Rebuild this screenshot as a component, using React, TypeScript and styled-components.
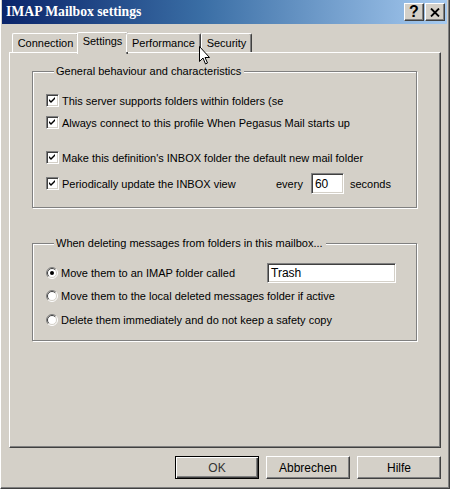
import React from "react";
import styled, { createGlobalStyle } from "styled-components";

const GlobalStyle = createGlobalStyle`
  html, body {
    margin: 0;
    padding: 0;
    background: #d4d0c8;
  }
  body {
    font-family: "Liberation Sans", Arial, sans-serif;
    font-size: 11px;
    color: #000;
  }
`;

const Window = styled.div`
  position: relative;
  box-sizing: border-box;
  width: 450px;
  height: 489px;
  background: #d4d0c8;
  border-left: 1px solid #ffffff;
  border-right: 1px solid #404040;
  border-bottom: 1px solid #404040;
  box-shadow: inset -1px -1px 0 #808080;
  display: flex;
  flex-direction: column;
`;

const TitleBar = styled.div`
  height: 24px;
  margin: 0 2px 0 1px;
  padding: 0 2px 0 4px;
  background: linear-gradient(90deg, #0a246a 0%, #3a6ea5 45%, #a6caf0 100%);
  display: flex;
  align-items: center;
`;

const Title = styled.div`
  flex: 1;
  color: #fff;
  font-family: "Liberation Serif", "Times New Roman", serif;
  font-weight: bold;
  font-size: 13.7px;
`;

const CaptionButton = styled.div`
  box-sizing: border-box;
  width: 20px;
  height: 18px;
  margin-left: 1px;
  background: #d4d0c8;
  border-top: 1px solid #ffffff;
  border-left: 1px solid #ffffff;
  border-right: 1px solid #404040;
  border-bottom: 1px solid #404040;
  box-shadow: inset -1px -1px 0 #808080;
  display: flex;
  align-items: center;
  justify-content: center;
  font-family: "Liberation Sans", Arial, sans-serif;
  font-weight: bold;
  font-size: 16px;
  line-height: 1;
  color: #000;
`;

const Content = styled.div`
  flex: 1;
  padding: 8px 8px 0 8px;
  display: flex;
  flex-direction: column;
`;

const TabStrip = styled.div`
  height: 20px;
  padding-left: 3px;
  display: flex;
  align-items: flex-end;
  position: relative;
  z-index: 1;
`;

const Tab = styled.div<{ $active?: boolean; $width: number }>`
  box-sizing: border-box;
  width: ${(p) => p.$width + (p.$active ? 4 : 0)}px;
  height: ${(p) => (p.$active ? 22 : 19)}px;
  margin: ${(p) => (p.$active ? "0 -2px -2px -2px" : "0")};
  background: #d4d0c8;
  border-top: 1px solid #ffffff;
  border-left: 1px solid #ffffff;
  border-right: 1px solid #404040;
  box-shadow: inset -1px 0 0 #808080;
  border-radius: 2px 2px 0 0;
  display: flex;
  align-items: ${(p) => (p.$active ? "flex-start" : "center")};
  padding-top: ${(p) => (p.$active ? 2 : 0)}px;
  justify-content: center;
  white-space: nowrap;
  font-size: 11px;
`;

const Panel = styled.div`
  box-sizing: border-box;
  width: 432px;
  height: 396px;
  background: #d4d0c8;
  border-top: 1px solid #ffffff;
  border-left: 1px solid #ffffff;
  border-right: 1px solid #404040;
  border-bottom: 1px solid #404040;
  box-shadow: inset -1px -1px 0 #808080;
  padding: 12px 0 0 22px;
`;

const Group = styled.fieldset<{ $height: number; $gap?: number }>`
  box-sizing: border-box;
  width: 385px;
  height: ${(p) => p.$height}px;
  margin: ${(p) => p.$gap ?? 0}px 0 0 0;
  padding: 0 0 0 13px;
  border: 1px solid #808080;
  box-shadow: 1px 1px 0 #ffffff, inset 1px 1px 0 #ffffff;
  min-width: 0;
`;

const Legend = styled.legend`
  margin-left: 8px;
  padding: 0 3px 0 2px;
  background: #d4d0c8;
  font-size: 11px;
  line-height: 13px;
`;

const Row = styled.div<{ $top: number }>`
  display: flex;
  align-items: center;
  margin-top: ${(p) => p.$top}px;
  height: 21px;
`;

const CheckBox = styled.span`
  box-sizing: border-box;
  width: 13px;
  height: 13px;
  flex: none;
  background: #fff;
  border-top: 1px solid #808080;
  border-left: 1px solid #808080;
  border-right: 1px solid #ffffff;
  border-bottom: 1px solid #ffffff;
  box-shadow: inset 1px 1px 0 #404040, inset -1px -1px 0 #d4d0c8;
  display: flex;
  align-items: center;
  justify-content: center;
`;

const OptionText = styled.span<{ $width?: number }>`
  margin-left: 3px;
  white-space: nowrap;
  ${(p) => (p.$width ? `width: ${p.$width}px; flex: none;` : "")}
`;

const PlainText = styled.span`
  white-space: nowrap;
  margin-right: 8px;
`;

const Field = styled.div<{ $width: number; $height: number }>`
  box-sizing: border-box;
  width: ${(p) => p.$width}px;
  height: ${(p) => p.$height}px;
  flex: none;
  background: #fff;
  border-top: 1px solid #808080;
  border-left: 1px solid #808080;
  border-right: 1px solid #ffffff;
  border-bottom: 1px solid #ffffff;
  box-shadow: inset 1px 1px 0 #404040, inset -1px -1px 0 #d4d0c8;
  padding: 1px 3px 0 3px;
  display: flex;
  align-items: center;
  font-size: 12px;
`;

const ButtonBar = styled.div`
  display: flex;
  justify-content: flex-end;
  gap: 7px;
  padding: 8px 0 0 0;
`;

const Button = styled.div<{ $default?: boolean }>`
  box-sizing: border-box;
  width: 84px;
  height: 23px;
  background: #d4d0c8;
  border: 1px solid;
  border-color: ${(p) =>
    p.$default ? "#000" : "#ffffff #404040 #404040 #ffffff"};
  box-shadow: ${(p) =>
    p.$default
      ? "inset 1px 1px 0 #ffffff, inset -1px -1px 0 #404040, inset -2px -2px 0 #808080"
      : "inset -1px -1px 0 #808080"};
  display: flex;
  align-items: center;
  justify-content: center;
  font-size: 12px;
  color: ${(p) => (p.$default ? "#333" : "#000")};
`;

const Cursor = styled.svg`
  position: absolute;
  left: 198px;
  top: 46px;
  z-index: 5;
`;

function Check() {
  return (
    <CheckBox>
      <svg width="7" height="7" viewBox="0 0 7 7">
        <path d="M0 2 L2 4 L6 0 L6 2 L2 6 L0 4 Z" fill="#000" />
      </svg>
    </CheckBox>
  );
}

function Radio({ checked }: { checked?: boolean }) {
  return (
    <svg width="12" height="12" viewBox="0 0 12 12" style={{ flex: "none" }}>
      <circle cx="6" cy="6" r="5" fill="#fff" />
      <path d="M2.1 9.9 A5.5 5.5 0 0 1 9.9 2.1" fill="none" stroke="#808080" strokeWidth="1" />
      <path d="M9.9 2.1 A5.5 5.5 0 0 1 2.1 9.9" fill="none" stroke="#ffffff" strokeWidth="1" />
      <path d="M2.8 9.2 A4.5 4.5 0 0 1 9.2 2.8" fill="none" stroke="#404040" strokeWidth="1" />
      <path d="M9.2 2.8 A4.5 4.5 0 0 1 2.8 9.2" fill="none" stroke="#d4d0c8" strokeWidth="1" />
      {checked && <circle cx="6" cy="6" r="2" fill="#000" />}
    </svg>
  );
}

const tabs = [
  { label: "Connection", width: 67 },
  { label: "Settings", width: 47, active: true },
  { label: "Performance", width: 75 },
  { label: "Security", width: 51 },
];

export default function App() {
  return (
    <>
      <GlobalStyle />
      <Window>
        <TitleBar>
          <Title>IMAP Mailbox settings</Title>
          <CaptionButton>?</CaptionButton>
          <CaptionButton>
            <svg width="10" height="9" viewBox="0 0 10 9">
              <path d="M1 0.5 L9 8.5 M9 0.5 L1 8.5" stroke="#000" strokeWidth="1.8" />
            </svg>
          </CaptionButton>
        </TitleBar>
        <Content>
          <TabStrip>
            {tabs.map((t) => (
              <Tab key={t.label} $width={t.width} $active={t.active}>
                {t.label}
              </Tab>
            ))}
          </TabStrip>
          <Panel>
            <Group $height={143}>
              <Legend>General behaviour and characteristics</Legend>
              <Row $top={12}>
                <Check />
                <OptionText>This server supports folders within folders (se</OptionText>
              </Row>
              <Row $top={1}>
                <Check />
                <OptionText>Always connect to this profile When Pegasus Mail starts up</OptionText>
              </Row>
              <Row $top={14}>
                <Check />
                <OptionText>Make this definition's INBOX folder the default new mail folder</OptionText>
              </Row>
              <Row $top={5}>
                <Check />
                <OptionText $width={214}>Periodically update the INBOX view</OptionText>
                <PlainText>every</PlainText>
                <Field $width={33} $height={21}>60</Field>
                <OptionText style={{ marginLeft: 6 }}>seconds</OptionText>
              </Row>
            </Group>
            <Group $height={104} $gap={29}>
              <Legend>When deleting messages from folders in this mailbox...</Legend>
              <Row $top={12}>
                <Radio checked />
                <OptionText $width={206}>Move them to an IMAP folder called</OptionText>
                <Field $width={129} $height={20}>Trash</Field>
              </Row>
              <Row $top={2}>
                <Radio />
                <OptionText>Move them to the local deleted messages folder if active</OptionText>
              </Row>
              <Row $top={3}>
                <Radio />
                <OptionText>Delete them immediately and do not keep a safety copy</OptionText>
              </Row>
            </Group>
          </Panel>
          <ButtonBar>
            <Button $default>OK</Button>
            <Button>Abbrechen</Button>
            <Button>Hilfe</Button>
          </ButtonBar>
        </Content>
        <Cursor width="12" height="19" viewBox="0 0 12 19">
          <path
            d="M0.5 0.5 L0.5 15.5 L4 12 L6.5 18 L8.5 17 L6 11.5 L10.5 11.5 Z"
            fill="#fff"
            stroke="#000"
            strokeWidth="1"
          />
        </Cursor>
      </Window>
    </>
  );
}
